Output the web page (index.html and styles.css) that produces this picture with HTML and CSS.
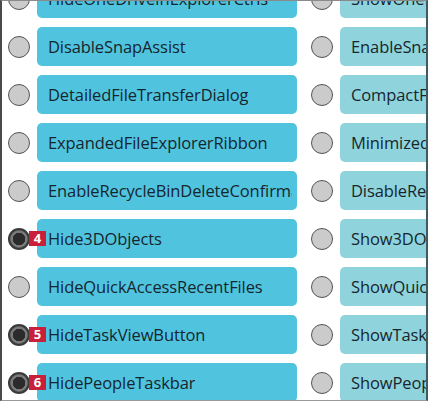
FILE: index.html
```html
<!DOCTYPE html>
<html>
<head>
<meta charset="utf-8">
<link rel="stylesheet" href="styles.css">
</head>
<body>
<div class="frame">
  <div class="list">
    <div class="row">
      <span class="radio"></span><span class="btn left"><span class="label">HideOneDriveInExplorerCtrls</span></span>
      <span class="radio second"></span><span class="btn right"><span class="label">ShowOneDriveInExplorer</span></span>
    </div>
    <div class="row">
      <span class="radio"></span><span class="btn left"><span class="label">DisableSnapAssist</span></span>
      <span class="radio second"></span><span class="btn right"><span class="label">EnableSnapAssist</span></span>
    </div>
    <div class="row">
      <span class="radio"></span><span class="btn left"><span class="label">DetailedFileTransferDialog</span></span>
      <span class="radio second"></span><span class="btn right"><span class="label">CompactFileTransferDialog</span></span>
    </div>
    <div class="row">
      <span class="radio"></span><span class="btn left"><span class="label">ExpandedFileExplorerRibbon</span></span>
      <span class="radio second"></span><span class="btn right"><span class="label">MinimizedFileExplorerRibbon</span></span>
    </div>
    <div class="row">
      <span class="radio"></span><span class="btn left"><span class="label">EnableRecycleBinDeleteConfirmation</span></span>
      <span class="radio second"></span><span class="btn right"><span class="label">DisableRecycleBinDeleteConfirmation</span></span>
    </div>
    <div class="row">
      <span class="radio checked"></span><span class="btn left"><span class="label">Hide3DObjects</span></span>
      <span class="radio second"></span><span class="btn right"><span class="label">Show3DObjects</span></span>
      <span class="badge">4</span>
    </div>
    <div class="row">
      <span class="radio"></span><span class="btn left"><span class="label">HideQuickAccessRecentFiles</span></span>
      <span class="radio second"></span><span class="btn right"><span class="label">ShowQuickAccessRecentFiles</span></span>
    </div>
    <div class="row">
      <span class="radio checked"></span><span class="btn left"><span class="label">HideTaskViewButton</span></span>
      <span class="radio second"></span><span class="btn right"><span class="label">ShowTaskViewButton</span></span>
      <span class="badge">5</span>
    </div>
    <div class="row">
      <span class="radio checked"></span><span class="btn left"><span class="label">HidePeopleTaskbar</span></span>
      <span class="radio second"></span><span class="btn right"><span class="label">ShowPeopleTaskbar</span></span>
      <span class="badge">6</span>
    </div>
  </div>
</div>
</body>
</html>
```

FILE: styles.css
```css
html, body {
  margin: 0;
  padding: 0;
  background: #ffffff;
}
.frame {
  width: 428px;
  height: 401px;
  box-sizing: border-box;
  border-left: 2px solid #4a4a4a;
  border-right: 2px solid #3f5a60;
  border-top: 1px solid #8a8a8a;
  border-bottom: 1px solid #9a9a9a;
  overflow: hidden;
  background: #ffffff;
}
.list {
  margin-top: -22px;
  display: flex;
  flex-direction: column;
  gap: 9px;
  padding-left: 6px;
}
.row {
  position: relative;
  display: flex;
  align-items: center;
  gap: 7px;
  height: 39px;
}
.radio {
  flex: 0 0 22px;
  width: 22px;
  height: 22px;
  box-sizing: border-box;
  border-radius: 50%;
  border: 1.5px solid #555;
  background: #cbcbcb;
}
.radio.second {
  margin-left: 7px;
}
.radio.checked {
  border: 2px solid #3a3a3a;
  background: radial-gradient(circle, #2b2b2b 0 6px, #7a7a7a 6.5px 8px, #5a5a5a 9px);
}
.btn {
  flex: 0 0 260px;
  width: 260px;
  height: 39px;
  border-radius: 5px;
  display: flex;
  align-items: center;
  padding: 0 5px 0 11px;
  box-sizing: border-box;
  overflow: hidden;
}
.label {
  min-width: 0;
  overflow: hidden;
  white-space: nowrap;
  font-family: "Open Sans", "Noto Sans", sans-serif;
  font-size: 16.5px;
  color: #17262e;
  letter-spacing: -0.1px;
}
.btn.left {
  background: #50c4de;
}
.btn.right {
  background: #8fd4dc;
}
.badge {
  position: absolute;
  left: 21px;
  top: 12px;
  width: 17px;
  height: 15px;
  background: #c8203a;
  color: #ffffff;
  font-family: "Open Sans", "Noto Sans", sans-serif;
  font-weight: 700;
  font-size: 13px;
  line-height: 15px;
  text-align: center;
}
```
